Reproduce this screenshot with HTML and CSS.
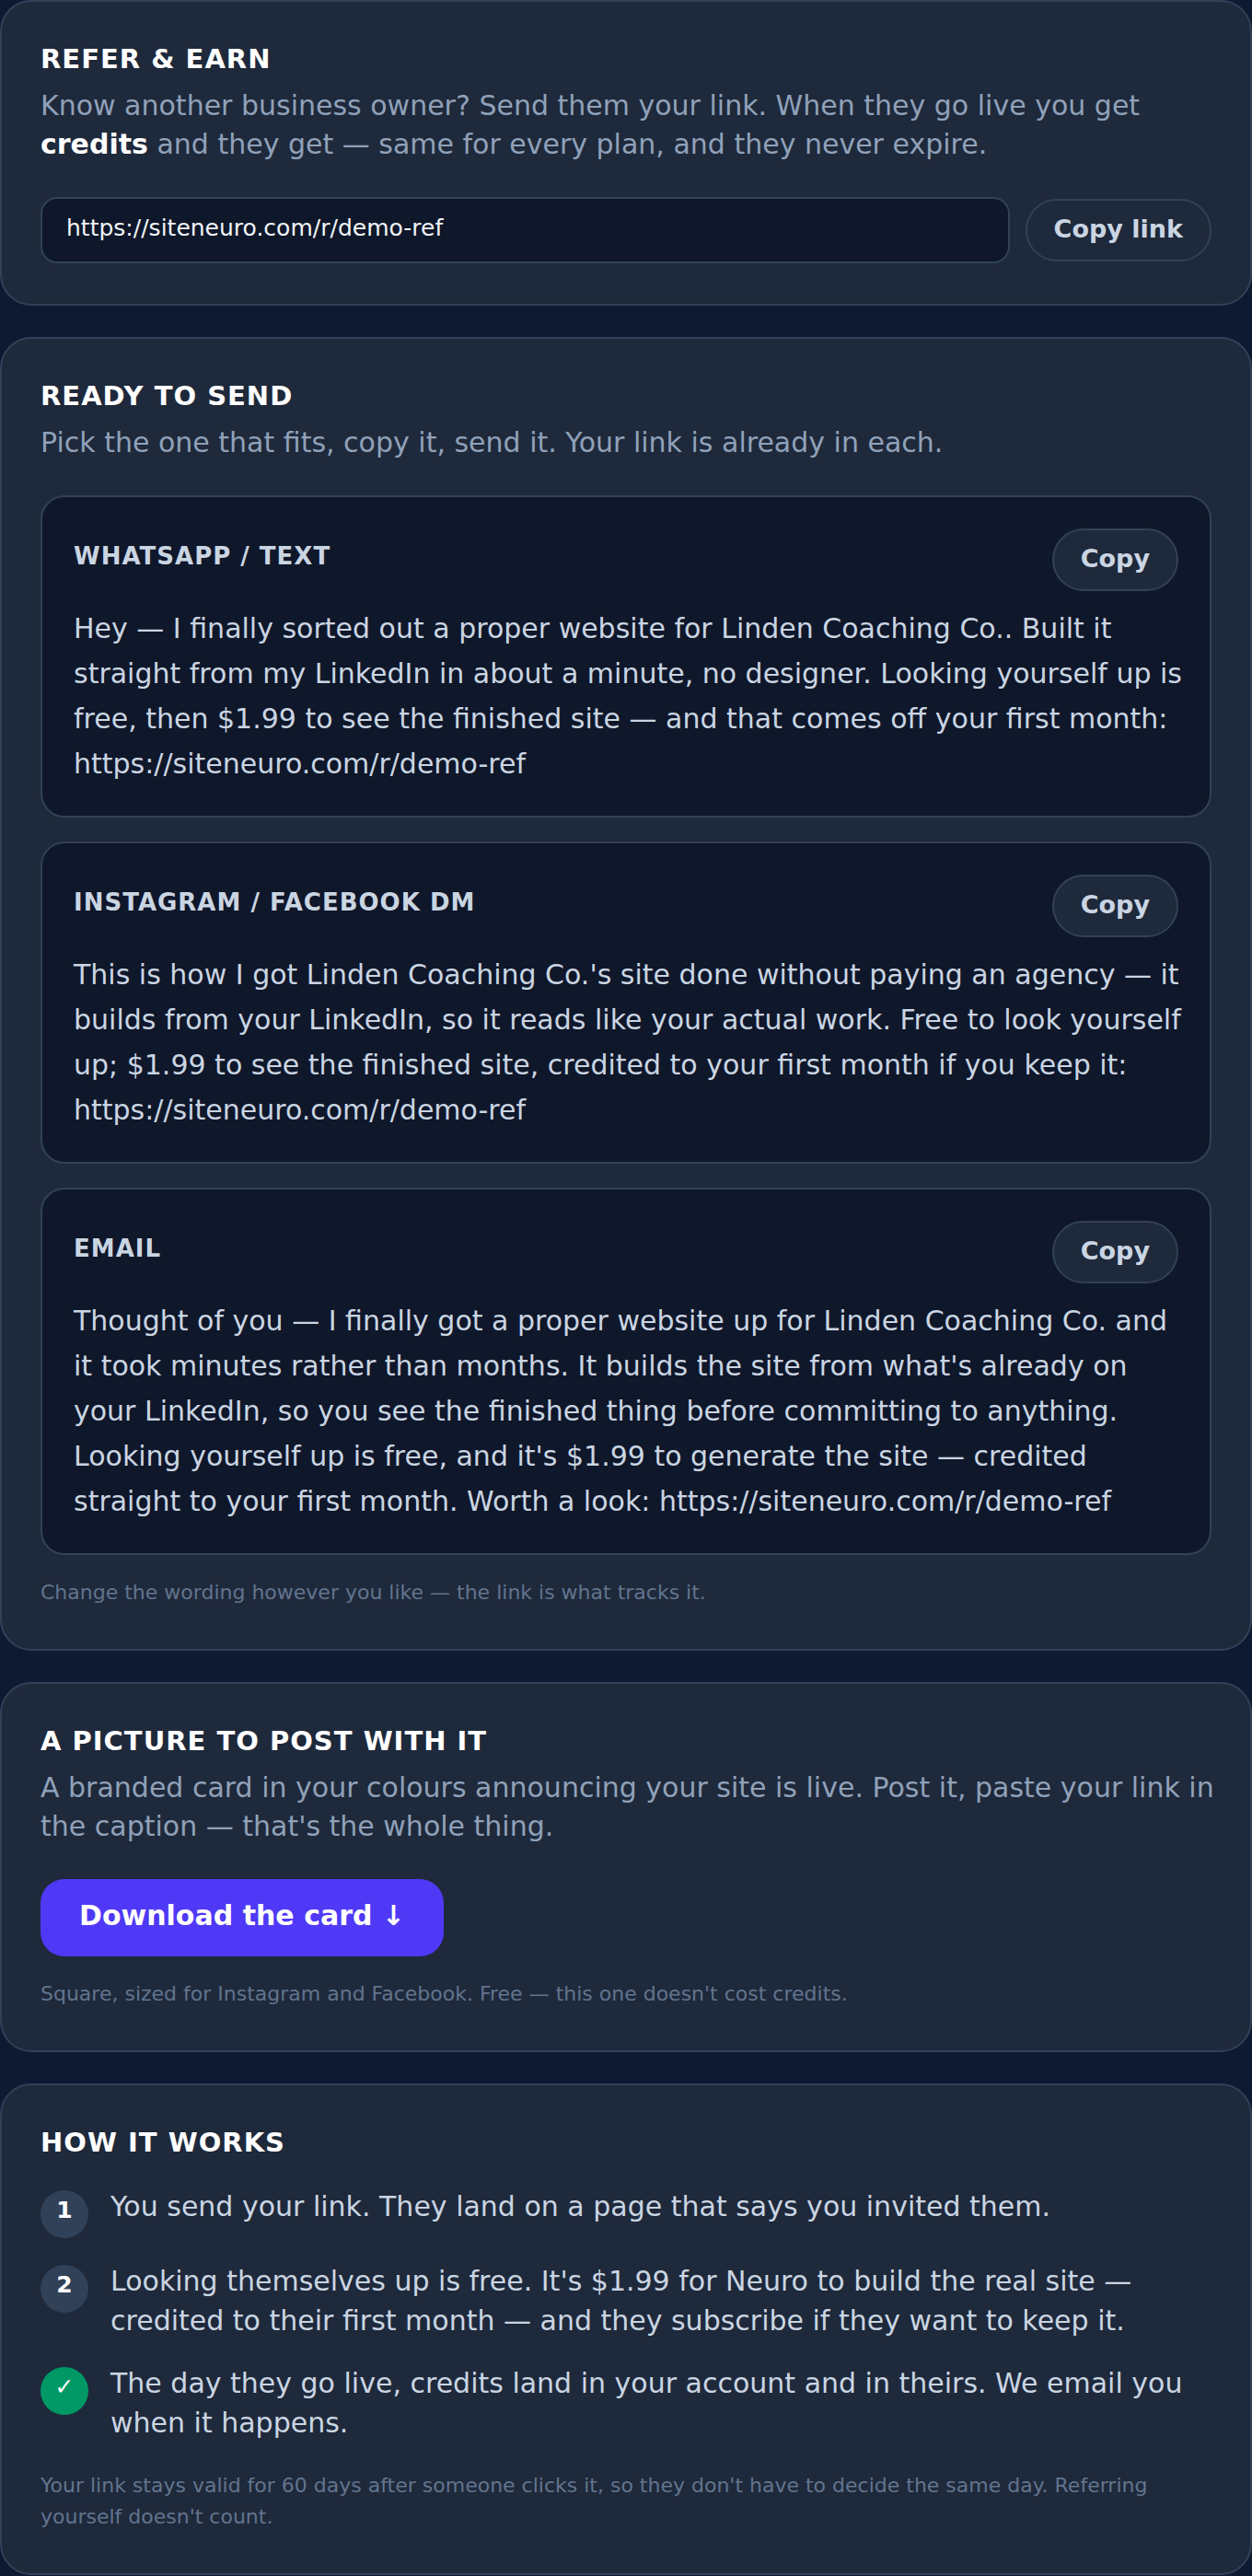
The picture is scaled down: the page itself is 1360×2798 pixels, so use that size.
FILE: index.html
```html
<!DOCTYPE html>
<html lang="en">
<head>
	<meta charset="UTF-8" />
	<meta name="viewport" content="width=device-width, initial-scale=1" />
	<title>Refer &amp; earn</title>
	<link rel="stylesheet" href="styles.css">
</head>
<body>

	<main class="cards">

		<section class="card">
			<h2><label for="ref_link">REFER &amp; EARN</label></h2>
			<p class="intro">Know another business owner? Send them your link. When they go live you get <strong>credits</strong> and they get — same for every plan, and they never expire.</p>
			<div class="link_row">
				<input id="ref_link" name="ref_link" type="text" value="https://siteneuro.com/r/demo-ref" readonly />
				<button type="button" class="copy">Copy link</button>
			</div>
		</section>

		<section class="card">
			<h2>READY TO SEND</h2>
			<p class="intro">Pick the one that fits, copy it, send it. Your link is already in each.</p>
			<div class="messages">
				<article class="message">
					<header>
						<h3>WHATSAPP / TEXT</h3>
						<button type="button" class="copy">Copy</button>
					</header>
					<p>Hey — I finally sorted out a proper website for Linden Coaching Co.. Built it straight from my LinkedIn in about a minute, no designer. Looking yourself up is free, then $1.99 to see the finished site — and that comes off your first month: https://siteneuro.com/r/demo-ref</p>
				</article>
				<article class="message">
					<header>
						<h3>INSTAGRAM / FACEBOOK DM</h3>
						<button type="button" class="copy">Copy</button>
					</header>
					<p>This is how I got Linden Coaching Co.'s site done without paying an agency — it builds from your LinkedIn, so it reads like your actual work. Free to look yourself up; $1.99 to see the finished site, credited to your first month if you keep it: https://siteneuro.com/r/demo-ref</p>
				</article>
				<article class="message">
					<header>
						<h3>EMAIL</h3>
						<button type="button" class="copy">Copy</button>
					</header>
					<p>Thought of you — I finally got a proper website up for Linden Coaching Co. and it took minutes rather than months. It builds the site from what's already on your LinkedIn, so you see the finished thing before committing to anything. Looking yourself up is free, and it's $1.99 to generate the site — credited straight to your first month. Worth a look: https://siteneuro.com/r/demo-ref</p>
				</article>
			</div>
			<p class="hint">Change the wording however you like — the link is what tracks it.</p>
		</section>

		<section class="card">
			<h2>A PICTURE TO POST WITH IT</h2>
			<p class="intro">A branded card in your colours announcing your site is live. Post it, paste your link in the caption — that's the whole thing.</p>
			<a class="download" href="#">Download the card ↓</a>
			<p class="hint">Square, sized for Instagram and Facebook. Free — this one doesn't cost credits.</p>
		</section>

		<section class="card">
			<h2>HOW IT WORKS</h2>
			<ol class="steps">
				<li>
					<span class="num">1</span>
					<p>You send your link. They land on a page that says you invited them.</p>
				</li>
				<li>
					<span class="num">2</span>
					<p>Looking themselves up is free. It's $1.99 for Neuro to build the real site — credited to their first month — and they subscribe if they want to keep it.</p>
				</li>
				<li>
					<span class="num done">✓</span>
					<p>The day they go live, credits land in your account and in theirs. We email you when it happens.</p>
				</li>
			</ol>
			<p class="hint">Your link stays valid for 60 days after someone clicks it, so they don't have to decide the same day. Referring yourself doesn't count.</p>
		</section>

	</main>

</body>
</html>
```
FILE: styles.css
```css
*{
    box-sizing: border-box;
}

body{
    margin: 0;
    background: #0d1a31;
    color: #cad5e2;
    font-family: "DejaVu Sans", sans-serif;
    font-size: 30px;
}

h2, h3, p, ol{
    margin: 0;
    padding: 0;
}

.cards{
    display: flex;
    flex-direction: column;
    gap: 34px;
}

.card{
    padding: 42px 42px 44px;
    border: 2px solid #314158;
    border-radius: 34px;
    background: #1e293b;
}

.card h2{
    color: #fff;
    font-size: 29px;
    line-height: 40px;
    letter-spacing: 1px;
}

.intro{
    margin: 10px -8px 36px 0;
    color: #90a1b9;
    line-height: 42px;
}

.intro strong{
    color: #fff;
}

.hint{
    margin-top: 24px;
    color: #62748e;
    font-size: 22px;
    line-height: 34px;
}

/* referral link */
.link_row{
    display: flex;
    align-items: center;
    gap: 17px;
}

.link_row input{
    flex: 1;
    min-width: 0;
    height: 72px;
    padding: 0 26px 6px;
    border: 2px solid #314158;
    border-radius: 18px;
    background: #0f172a;
    color: #f1f5f9;
    font-family: inherit;
    font-size: 25px;
}

.copy{
    height: 68px;
    padding: 0 29px 4px;
    border: 2px solid #314158;
    border-radius: 34px;
    background: #1e293b;
    color: #cad5e2;
    font-family: inherit;
    font-size: 27px;
    font-weight: bold;
    white-space: nowrap;
}

/* ready-made messages */
.messages{
    display: flex;
    flex-direction: column;
    gap: 26px;
}

.message{
    padding: 34px 34px 32px;
    border: 2px solid #314158;
    border-radius: 26px;
    background: #0f172a;
}

.message header{
    display: flex;
    justify-content: space-between;
    align-items: center;
    margin-bottom: 16px;
}

.message h3{
    padding-bottom: 8px;
    font-size: 26px;
    letter-spacing: 1px;
}

.message p{
    margin-right: -8px;
    line-height: 49px;
    overflow-wrap: break-word;
}

/* share card */
.download{
    display: block;
    width: fit-content;
    padding: 19px 42px 23px;
    border-radius: 26px;
    background: #4f39f6;
    color: #fff;
    font-weight: bold;
    line-height: 42px;
    text-decoration: none;
}

/* how it works */
.steps{
    display: flex;
    flex-direction: column;
    gap: 25px;
    margin: 28px 0 30px;
    list-style: none;
}

.steps li{
    display: flex;
    align-items: flex-start;
    gap: 24px;
    line-height: 43px;
}

.num{
    flex: none;
    width: 52px;
    height: 52px;
    margin-top: 4px;
    border-radius: 50%;
    background: #314158;
    color: #fff;
    font-size: 25px;
    font-weight: bold;
    line-height: 44px;
    text-align: center;
}

.num.done{
    background: #009966;
}
```
